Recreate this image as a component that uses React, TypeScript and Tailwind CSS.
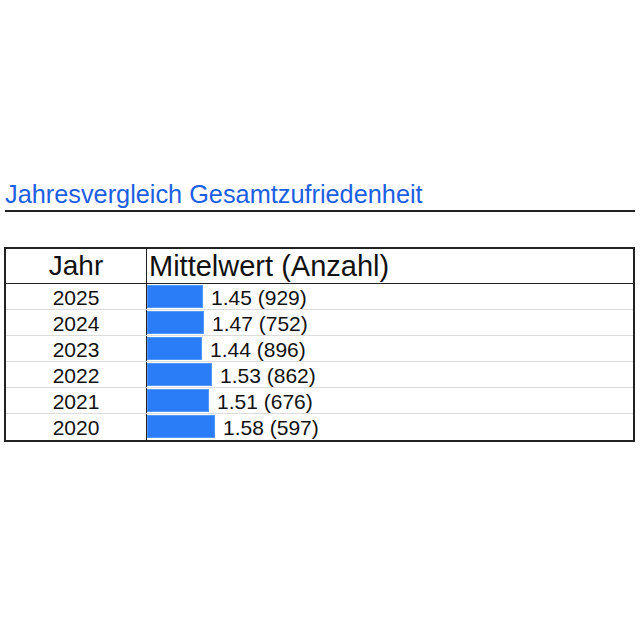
import React from 'react';

const rows = [
  { year: '2025', mean: '1.45', count: 929, bar: 56 },
  { year: '2024', mean: '1.47', count: 752, bar: 57 },
  { year: '2023', mean: '1.44', count: 896, bar: 55 },
  { year: '2022', mean: '1.53', count: 862, bar: 65 },
  { year: '2021', mean: '1.51', count: 676, bar: 62 },
  { year: '2020', mean: '1.58', count: 597, bar: 68 },
];

export default function App() {
  return (
    <div className="w-[640px] h-[640px] bg-white text-[#111] font-['Liberation_Sans',Arial,sans-serif]">
      {/* Titel */}
      <div className="pt-[180px] pl-[5px] pr-[5px]">
        <div className="border-b-2 border-[#222] pb-[2px]">
          <h2 className="text-[25.3px] leading-[28px] text-[#1c5fe3]">Jahresvergleich Gesamtzufriedenheit</h2>
        </div>
      </div>

      {/* Tabelle */}
      <div className="mt-[35px] ml-[4px] w-[631px] border-2 border-[#222]">
        <div className="flex h-[35px] border-b border-[#222]">
          <div className="w-[141px] border-r border-[#222] flex items-center justify-center text-[28px] leading-none">
            Jahr
          </div>
          <div className="flex-1 flex items-center pl-[2px] text-[29px] leading-none">Mittelwert (Anzahl)</div>
        </div>
        {rows.map((r, i) => (
          <div
            key={r.year}
            className={`flex h-[26px] text-[21px] leading-none ${i < rows.length - 1 ? 'border-b border-[#dcdcdc]' : ''}`}
          >
            <div className="w-[141px] border-r border-[#222] flex items-center justify-center pt-[1px]">
              {r.year}
            </div>
            <div className="flex-1 flex items-center">
              <div
                className="h-[23px] mt-[-1px] bg-[#2a7df6] border border-[#5597f8]"
                style={{ width: r.bar }}
              />
              <span className="ml-[8px] pt-[1px]">
                {r.mean} ({r.count})
              </span>
            </div>
          </div>
        ))}
      </div>
    </div>
  );
}
